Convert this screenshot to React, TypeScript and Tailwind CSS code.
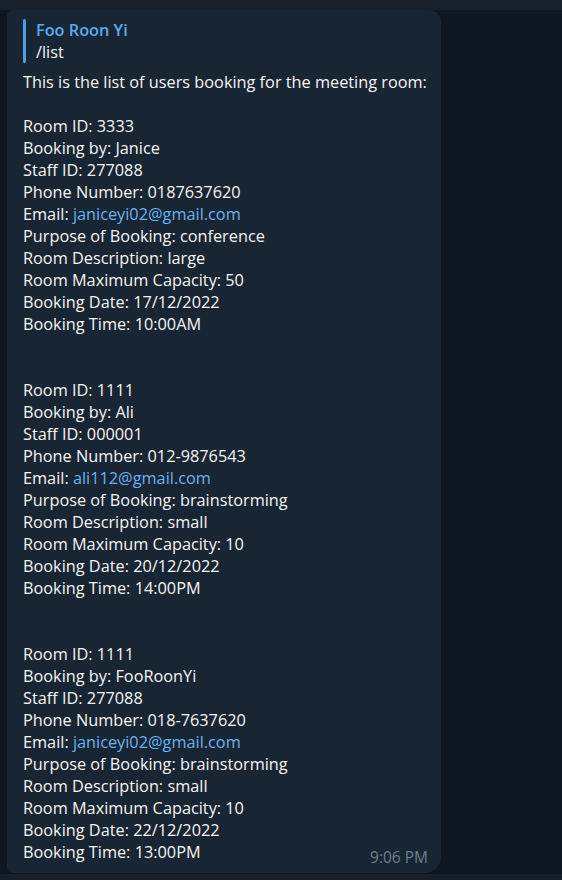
const bookings = [
  {
    room: "3333",
    by: "Janice",
    staff: "277088",
    phone: "0187637620",
    email: "janiceyi02@gmail.com",
    purpose: "conference",
    desc: "large",
    cap: "50",
    date: "17/12/2022",
    time: "10:00AM",
  },
  {
    room: "1111",
    by: "Ali",
    staff: "000001",
    phone: "012-9876543",
    email: "ali112@gmail.com",
    purpose: "brainstorming",
    desc: "small",
    cap: "10",
    date: "20/12/2022",
    time: "14:00PM",
  },
  {
    room: "1111",
    by: "FooRoonYi",
    staff: "277088",
    phone: "018-7637620",
    email: "janiceyi02@gmail.com",
    purpose: "brainstorming",
    desc: "small",
    cap: "10",
    date: "22/12/2022",
    time: "13:00PM",
  },
];

export default function App() {
  return (
    <div
      className="w-[562px] h-[880px] bg-[#0e1621] flex flex-col overflow-hidden text-[#f5f5f5]"
      style={{ fontFamily: '"Open Sans", "Noto Sans", sans-serif' }}
    >
      {/* top strip */}
      <div className="h-[10px] bg-[#17212b] shrink-0" />

      <div className="flex-1 pl-[7px]">
        {/* message bubble */}
        <div className="relative w-[434px] h-[863px] bg-[#182533] rounded-tl-[6px] rounded-tr-[12px] rounded-bl-[6px] rounded-br-[16px] pl-4 pr-1 pt-[9px] whitespace-nowrap">
          {/* reply quote */}
          <div className="flex gap-[10px]">
            <div className="w-[3px] bg-[#4a9fe8] rounded-sm" />
            <div className="text-[16.3px] leading-[22px]">
              <div className="font-semibold text-[#5ea9ed]">Foo Roon Yi</div>
              <div>/list</div>
            </div>
          </div>

          <div className="mt-[8px] text-[16.3px] leading-[22px]">
            <div>This is the list of users booking for the meeting room:</div>
            {bookings.map((b, i) => (
              <div key={i}>
                <div className="h-[22px]" />
                {i > 0 && <div className="h-[22px]" />}
                <div>Room ID: {b.room}</div>
                <div>Booking by: {b.by}</div>
                <div>Staff ID: {b.staff}</div>
                <div>Phone Number: {b.phone}</div>
                <div>
                  Email: <span className="text-[#6ab3f3]">{b.email}</span>
                </div>
                <div>Purpose of Booking: {b.purpose}</div>
                <div>Room Description: {b.desc}</div>
                <div>Room Maximum Capacity: {b.cap}</div>
                <div>Booking Date: {b.date}</div>
                <div>Booking Time: {b.time}</div>
              </div>
            ))}
          </div>

          <div className="absolute right-[13px] bottom-[4px] text-[15.5px] text-[#6d7f8f]">9:06 PM</div>
        </div>
      </div>

      {/* bottom strip */}
      <div className="h-[6px] bg-[#17212b] shrink-0" />
    </div>
  );
}
